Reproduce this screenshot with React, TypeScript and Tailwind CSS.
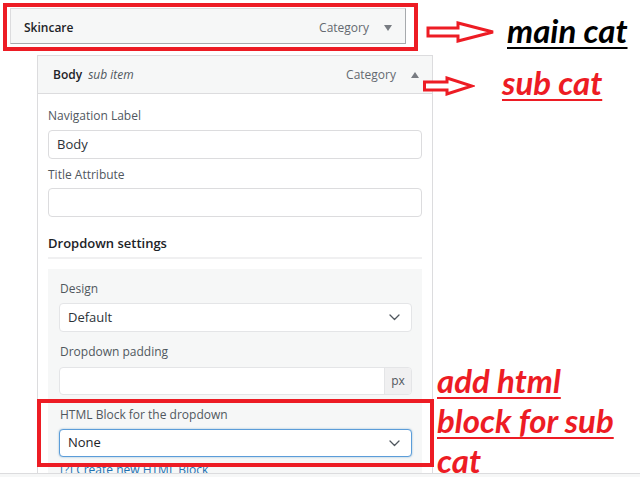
import { FC, ReactNode } from "react";

const Label: FC<{ children: ReactNode }> = ({ children }) => (
  <p className="text-[12px] leading-[16px] text-[#50575e]">{children}</p>
);

const Chevron = () => (
  <svg width="11" height="7" viewBox="0 0 11 7" fill="none">
    <polyline
      points="1,1 5.5,5.5 10,1"
      stroke="#50575e"
      strokeWidth="1.3"
      strokeLinecap="round"
      strokeLinejoin="round"
    />
  </svg>
);

const Triangle: FC<{ up?: boolean }> = ({ up }) => (
  <svg width="8" height="6" viewBox="0 0 8 6">
    <polygon points={up ? "0,6 4,0 8,6" : "0,0 8,0 4,6"} fill="#787c82" />
  </svg>
);

const SelectBox: FC<{ value: string; active?: boolean }> = ({
  value,
  active,
}) => (
  <div
    className={
      active
        ? "h-[28px] bg-white border border-[#5b9dd9] shadow-[0_0_2px_rgba(34,113,177,0.5)] rounded-[4px] flex items-center justify-between pl-[8px] pr-[11px] text-[13px] text-[#1d2327]"
        : "h-[29px] bg-white border border-[#e4e5e7] rounded-[4px] flex items-center justify-between pl-[8px] pr-[11px] text-[13px] text-[#2c3338]"
    }
  >
    <span>{value}</span>
    <Chevron />
  </div>
);

export default function App() {
  return (
    <div className="w-[640px] h-[477px] overflow-hidden bg-white font-['Open_Sans',sans-serif] flex flex-col">
      <div className="h-[474px] shrink-0 overflow-hidden border-b border-[#dcdcde] pl-[3px] pt-[3px]">
        {/* main cat row */}
        <div className="flex items-start">
          <div className="w-[415px] h-[48px] shrink-0 border-4 border-[#ed1c24] pl-[3px] pt-[1px]">
            <div className="w-[396px] h-[36px] bg-[#f6f7f7] border border-[#dcdcde] border-r-[#a7aaad] border-b-[#a7aaad] flex items-center justify-between pl-[13px] pr-[13px] pt-[3px]">
              <span className="text-[12px] font-semibold text-[#1d2327]">
                Skincare
              </span>
              <div className="flex items-center gap-[15px]">
                <span className="text-[12px] text-[#646970]">Category</span>
                <Triangle />
              </div>
            </div>
          </div>
          <svg
            className="ml-[8px] mt-[18px] shrink-0"
            width="70"
            height="22"
            viewBox="0 0 70 22"
          >
            <polygon
              points="2,7 32,7 32,2 67,11 32,20 32,15 2,15"
              fill="white"
              stroke="#ed1c24"
              strokeWidth="3"
            />
          </svg>
          <span className="ml-[11px] mt-[11px] font-['Lato',sans-serif] text-[33px] leading-[32px] font-bold italic text-black underline decoration-2 underline-offset-[4px] whitespace-nowrap">
            main cat
          </span>
        </div>

        {/* sub item row */}
        <div className="flex items-start mt-[4px]">
          <div className="ml-[34px] w-[396px] shrink-0 border border-[#dcdcde]">
            <div className="h-[38px] bg-[#f6f7f7] border-b border-[#dcdcde] flex items-center justify-between pl-[15px] pr-[13px] pt-[1px]">
              <div className="flex items-center gap-[6px] text-[12px]">
                <span className="font-semibold text-[#1d2327]">Body</span>
                <span className="italic text-[#50575e]">sub item</span>
              </div>
              <div className="flex items-center gap-[15px]">
                <span className="text-[12px] text-[#646970]">Category</span>
                <Triangle up />
              </div>
            </div>

            <div className="px-[10px] pt-[14px] pb-[20px]">
              <Label>Navigation Label</Label>
              <div className="mt-[6px] h-[29px] border border-[#dcdcde] rounded-[4px] flex items-center px-[8px] text-[13px] text-[#2c3338]">
                Body
              </div>
              <div className="mt-[8px]">
                <Label>Title Attribute</Label>
              </div>
              <div className="mt-[5px] h-[29px] border border-[#dcdcde] rounded-[4px]" />

              <h4 className="mt-[17px] text-[13px] leading-[18px] font-semibold text-[#1d2327]">
                Dropdown settings
              </h4>
              <div className="mt-[5px] h-[2px] bg-[#f0f0f1]" />

              <div className="mt-[10px] bg-[#f6f7f7] pl-[11px] pr-[10px] pt-[12px] pb-[20px]">
                <div className="pl-[1px]">
                  <Label>Design</Label>
                </div>
                <div className="mt-[6px]">
                  <SelectBox value="Default" />
                </div>

                <div className="mt-[12px] pl-[1px]">
                  <Label>Dropdown padding</Label>
                </div>
                <div className="mt-[7px] h-[28px] bg-white border border-[#e4e5e7] rounded-[4px] flex overflow-hidden">
                  <div className="flex-1" />
                  <div className="w-[27px] bg-[#f0f0f1] border-l border-[#e4e5e7] flex items-center justify-center text-[12px] text-[#50575e]">
                    px
                  </div>
                </div>

                <div className="relative mt-[12px]">
                  <div className="pl-[1px]">
                    <Label>HTML Block for the dropdown</Label>
                  </div>
                  <div className="mt-[6px]">
                    <SelectBox value="None" active />
                  </div>
                  {/* annotation frame over the html block field */}
                  <div className="absolute left-[-22px] top-[-8px] w-[397px] h-[68px] border-4 border-[#ed1c24] pointer-events-none" />
                </div>

                <p className="mt-[5px] pl-[1px] text-[12px] leading-[16px] text-[#2271b1]">
                  [?] Create new HTML Block
                </p>
              </div>
            </div>
          </div>

          <div className="ml-[-10px] flex flex-col shrink-0">
            <div className="flex items-start">
              <svg
                className="mt-[21px] shrink-0"
                width="52"
                height="20"
                viewBox="0 0 52 20"
              >
                <polygon
                  points="1.5,6 24,6 24,2 49,10 24,18 24,14 1.5,14"
                  fill="white"
                  stroke="#ed1c24"
                  strokeWidth="3"
                />
              </svg>
              <span className="ml-[27px] mt-[11px] font-['Lato',sans-serif] text-[33px] leading-[32px] font-bold italic text-[#ed1c24] underline decoration-2 underline-offset-[4px] whitespace-nowrap">
                sub cat
              </span>
            </div>
            <p className="ml-[14px] mt-[262px] font-['Lato',sans-serif] text-[33px] leading-[40px] font-bold italic text-[#ed1c24] underline decoration-2 underline-offset-[4px] whitespace-nowrap">
              add html
              <br />
              block for sub
              <br />
              cat
            </p>
          </div>
        </div>
      </div>
      <div className="flex-1 bg-[#f6f7f7]" />
    </div>
  );
}
